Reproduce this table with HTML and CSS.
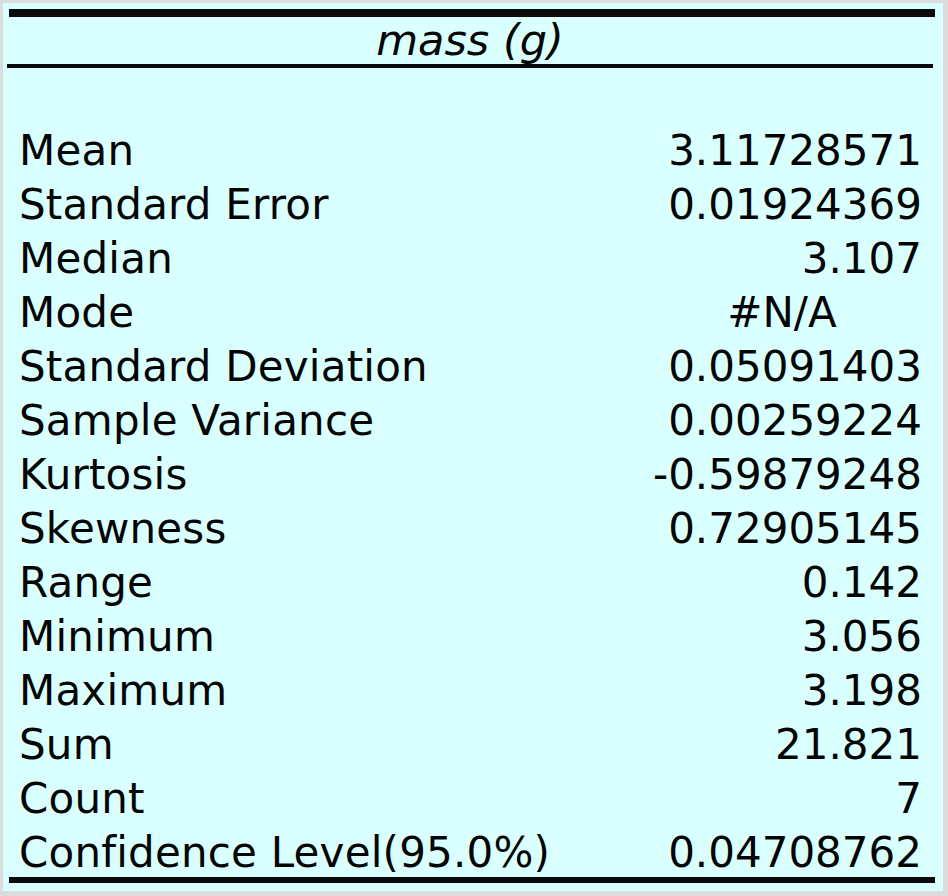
FILE: index.html
```html
<!DOCTYPE html>
<html>
<head>
<meta charset="utf-8">
<link rel="stylesheet" href="styles.css">
</head>
<body>
<div class="panel">
  <div class="table">
    <div class="rule-top"></div>
    <div class="head">mass (g)</div>
    <div class="rule-head"></div>
    <div class="spacer"></div>
    <div class="rows">
      <div class="row"><span class="label">Mean</span><span class="value">3.11728571</span></div>
      <div class="row"><span class="label">Standard Error</span><span class="value">0.01924369</span></div>
      <div class="row"><span class="label">Median</span><span class="value">3.107</span></div>
      <div class="row"><span class="label">Mode</span><span class="value center">#N/A</span></div>
      <div class="row"><span class="label">Standard Deviation</span><span class="value">0.05091403</span></div>
      <div class="row"><span class="label">Sample Variance</span><span class="value">0.00259224</span></div>
      <div class="row"><span class="label">Kurtosis</span><span class="value">-0.59879248</span></div>
      <div class="row"><span class="label">Skewness</span><span class="value">0.72905145</span></div>
      <div class="row"><span class="label">Range</span><span class="value">0.142</span></div>
      <div class="row"><span class="label">Minimum</span><span class="value">3.056</span></div>
      <div class="row"><span class="label">Maximum</span><span class="value">3.198</span></div>
      <div class="row"><span class="label">Sum</span><span class="value">21.821</span></div>
      <div class="row"><span class="label">Count</span><span class="value">7</span></div>
      <div class="row"><span class="label">Confidence Level(95.0%)</span><span class="value">0.04708762</span></div>
    </div>
    <div class="rule-bottom"></div>
  </div>
</div>
</body>
</html>
```
FILE: styles.css
```css
html, body {
  margin: 0;
  padding: 0;
  background: #dcdcdc;
}
body {
  width: 948px;
  height: 896px;
  overflow: hidden;
  font-family: "DejaVu Sans", Verdana, sans-serif;
  font-size: 42px;
  color: #050505;
}
.panel {
  margin: 3px 5px 0 3px;
  height: 882px;
  padding-top: 6px;
  background: #d9ffff;
}
.table {
  margin-left: 6px;
  width: 926px;
}
.rule-top {
  height: 8px;
  background: #0a0a0a;
}
.head {
  height: 47px;
  line-height: 47px;
  text-align: center;
  font-style: italic;
  font-size: 43px;
  padding-right: 4px;
}
.rule-head {
  position: relative;
  z-index: 1;
  height: 4px;
  margin-left: -2px;
  width: 926px;
  background: #0a0a0a;
}
.spacer {
  height: 56px;
}
.rows {
  margin-bottom: -3px;
}
.row {
  display: flex;
  justify-content: space-between;
  height: 54px;
  line-height: 54px;
  padding: 0 13px 0 10px;
  white-space: nowrap;
}
.label {
  letter-spacing: 0.2px;
}
.value {
  width: 280px;
  text-align: right;
}
.value.center {
  text-align: center;
}
.rule-bottom {
  position: relative;
  height: 6px;
  background: #0a0a0a;
}
```
